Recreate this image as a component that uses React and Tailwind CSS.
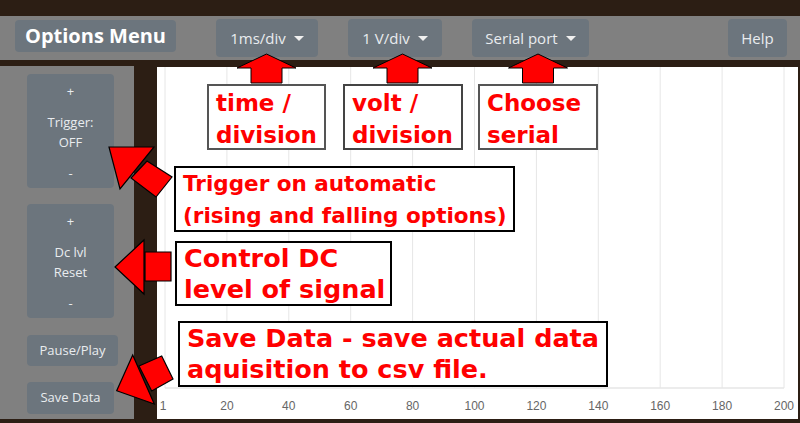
import React from "react";

function Dropdown({ label, className }) {
  return (
    <div
      className={
        "mt-[3px] flex h-[38px] items-center justify-center gap-[8px] rounded-[4px] bg-[#6c757d] text-[15px] text-[#e9ecef] " +
        className
      }
    >
      <span>{label}</span>
      <span className="h-0 w-0 border-l-[5px] border-r-[5px] border-t-[5px] border-l-transparent border-r-transparent border-t-[#f0f0f0]" />
    </div>
  );
}

function SideTall({ l1, l2 }) {
  return (
    <div className="flex h-[114px] w-[87px] flex-col items-center rounded-[4px] bg-[#6c757d] pt-[7px] text-[13px] leading-[20px] text-[#e9ecef]">
      <span>+</span>
      <span className="mt-[11px]">{l1}</span>
      <span>{l2}</span>
      <span className="mt-[11px]">-</span>
    </div>
  );
}

function Note({ className, children }) {
  return (
    <div
      className={
        "absolute bg-white pl-[7px] font-['DejaVu_Sans',sans-serif] font-bold text-[#ff0000] " +
        className
      }
    >
      {children}
    </div>
  );
}

export default function App() {
  const ticks = [1, 20, 40, 60, 80, 100, 120, 140, 160, 180, 200];
  const xs = ticks.map((_, i) => 8 + i * 61.9);
  return (
    <div className="relative h-[423px] w-[800px] overflow-hidden bg-[#2c1e14] font-['Open_Sans',sans-serif]">
      <div className="pt-[16px]">
        <header className="flex h-[44px] items-start bg-[#808080]">
          <div className="ml-[15px] mt-[4px] flex h-[32px] w-[161px] items-center justify-center rounded-[4px] bg-[#6c757d] text-[20px] font-bold text-white">
            Options Menu
          </div>
          <Dropdown className="ml-[40px] w-[102px]" label="1ms/div" />
          <Dropdown className="ml-[30px] w-[94px]" label="1 V/div" />
          <Dropdown className="ml-[30px] w-[117px]" label="Serial port" />
          <div className="ml-auto mr-[13px] mt-[3px] flex h-[38px] w-[59px] items-center justify-center rounded-[4px] bg-[#6c757d] text-[15px] text-[#e9ecef]">
            Help
          </div>
        </header>
      </div>

      <div className="mt-[6px] flex items-start">
        <aside className="flex h-[353px] w-[134px] flex-col items-start bg-[#808080] pl-[27px] pt-[8px]">
          <SideTall l1="Trigger:" l2="OFF" />
          <div className="mt-[16px]">
            <SideTall l1="Dc lvl" l2="Reset" />
          </div>
          <div className="mt-[17px] flex h-[31px] w-[91px] items-center justify-center rounded-[4px] bg-[#6c757d] text-[13px] text-[#e9ecef]">
            Pause/Play
          </div>
          <div className="mt-[16px] flex h-[32px] w-[87px] items-center justify-center rounded-[4px] bg-[#6c757d] text-[13px] text-[#e9ecef]">
            Save Data
          </div>
        </aside>

        <div className="ml-[23px] mt-[1px] h-[352px] w-[641px] bg-white">
          <svg width="641" height="352" className="block">
            {xs.map((x, i) => (
              <line key={i} x1={x} y1={0} x2={x} y2={321} stroke="#e6e6e6" strokeWidth="1" />
            ))}
            <line x1={xs[0]} y1={321} x2={xs[10]} y2={321} stroke="#e6e6e6" strokeWidth="1.5" />
            {ticks.map((t, i) => (
              <text
                key={t}
                x={i === 0 ? xs[0] - 2 : xs[i]}
                y={343}
                textAnchor="middle"
                fontSize="12"
                fill="#666666"
                fontFamily="'Liberation Sans', Arial, sans-serif"
              >
                {t}
              </text>
            ))}
          </svg>
        </div>
      </div>

      {/* annotation boxes */}
      <Note className="left-[207px] top-[84px] h-[66px] w-[119px] border-2 border-[#555555] pt-[1px] text-[23px] leading-[32px]">
        time /<br />division
      </Note>
      <Note className="left-[343px] top-[84px] h-[66px] w-[120px] border-2 border-[#444444] pt-[1px] text-[23px] leading-[32px]">
        volt /<br />division
      </Note>
      <Note className="left-[478px] top-[84px] h-[66px] w-[120px] border-2 border-[#555555] pt-[1px] text-[23px] leading-[32px]">
        Choose<br />serial
      </Note>
      <Note className="left-[174px] top-[166px] h-[66px] w-[341px] border-2 border-black text-[21.5px] leading-[32px]">
        Trigger on automatic
        <br />
        (rising and falling options)
      </Note>
      <Note className="left-[175px] top-[241px] h-[65px] w-[217px] border-2 border-black text-[25.5px] leading-[31px]">
        Control DC
        <br />
        level of signal
      </Note>
      <Note className="left-[178px] top-[321px] h-[66px] w-[430px] border-2 border-black text-[25.5px] leading-[31px]">
        Save Data - save actual data
        <br />
        aquisition to csv file.
      </Note>

      {/* arrows */}
      <svg className="pointer-events-none absolute left-0 top-0" width="800" height="423">
        {[0, 136, 271.5].map((dx) => (
          <polygon
            key={dx}
            transform={`translate(${dx} 0)`}
            points="266.5,54 296,68 282,68 282,83 251,83 251,68 237,68"
            fill="#ff0000"
            stroke="#000"
            strokeWidth="1"
          />
        ))}
        <polygon points="131,178 147,161 172,177 156,197" fill="#ff0000" stroke="#000" strokeWidth="1.2" />
        <polygon points="109,147 154,147 120,189" fill="#ff0000" stroke="#000" strokeWidth="1.2" />
        <polygon points="145,252 171,252 171,281 145,281" fill="#ff0000" stroke="#000" strokeWidth="1.2" />
        <polygon points="115,267 144,240 144,294" fill="#ff0000" stroke="#000" strokeWidth="1.2" />
        <polygon points="139,366 161.7,356 173,379 151.7,391" fill="#ff0000" stroke="#000" strokeWidth="1.2" />
        <polygon points="132.7,355 116.7,390.7 154.3,404" fill="#ff0000" stroke="#000" strokeWidth="1.2" />
      </svg>
    </div>
  );
}
